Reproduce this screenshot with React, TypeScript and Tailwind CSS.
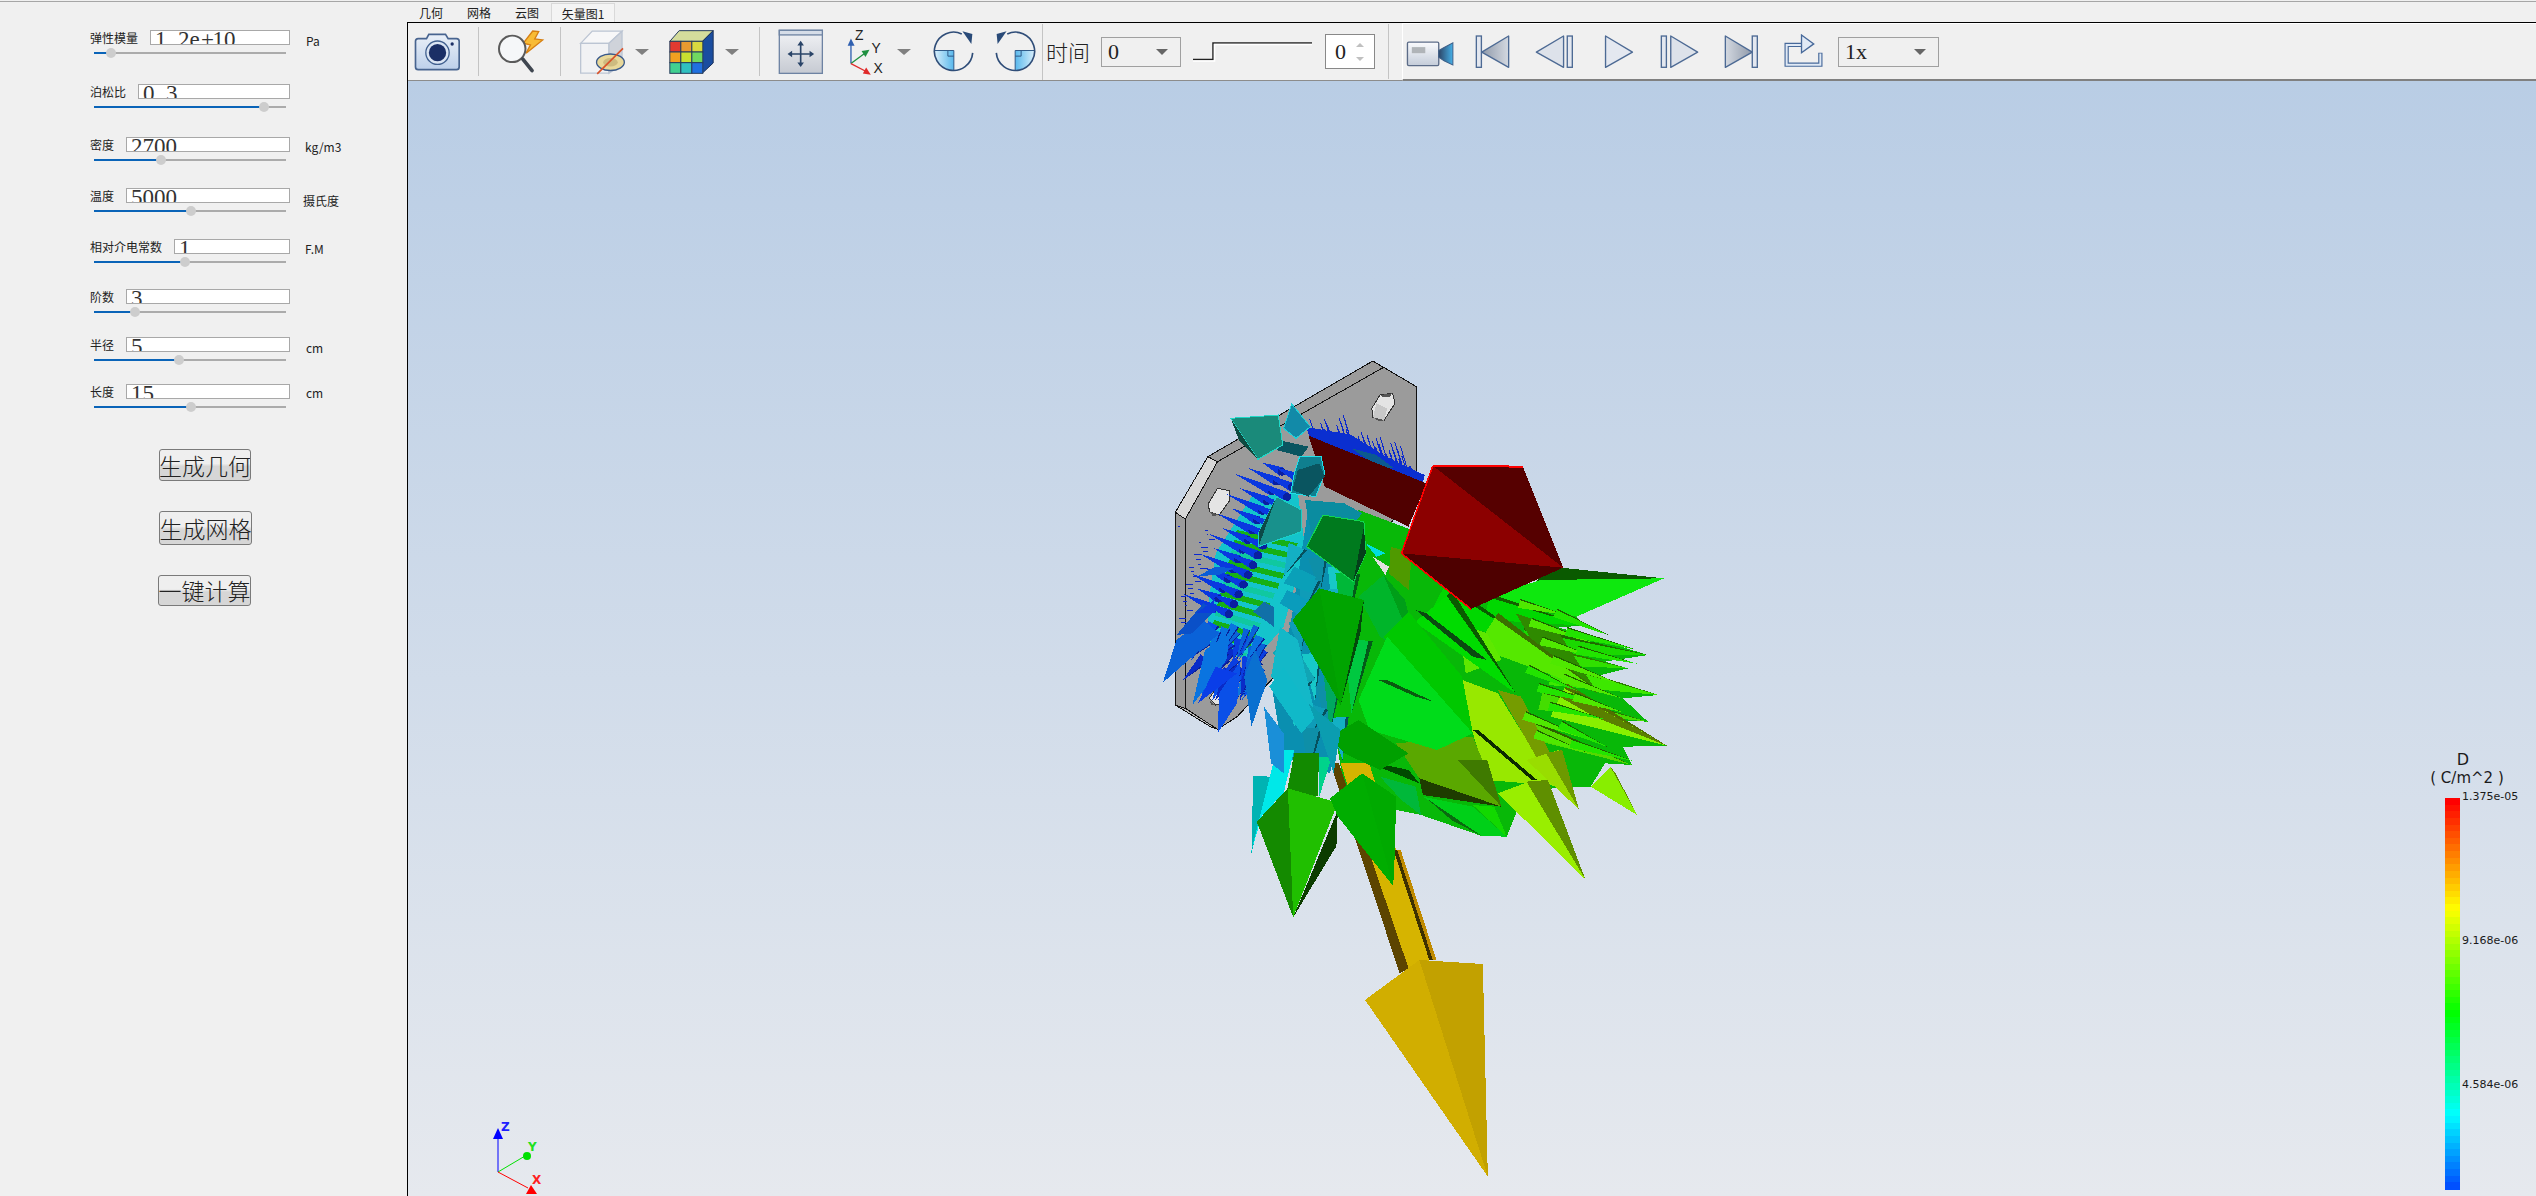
import type { ReactNode } from "react";

const cjk = "font-['Noto_Sans_CJK_SC',sans-serif]";
const serif = "font-['Liberation_Serif','Noto_Sans_CJK_SC',serif]";

interface Param {
  label: string;
  value: string;
  unit?: string;
  unitClass?: string;
  thumb: number;
  rowClass: string;
}

// thumb = distance of the handle from the start of the track
const params: Param[] = [
  { label: "弹性模量", value: "1.2e+10", unit: "Pa", unitClass: "ml-4 mt-[3px]", thumb: 17, rowClass: "mt-[28px]" },
  { label: "泊松比", value: "0.3", thumb: 170, rowClass: "mt-[26px]" },
  { label: "密度", value: "2700", unit: "kg/m3", unitClass: "ml-[15px] mt-[2px]", thumb: 67, rowClass: "mt-[25px]" },
  { label: "温度", value: "5000", unit: "摄氏度", unitClass: "ml-[13px] mt-[5px]", thumb: 97, rowClass: "mt-[23px]" },
  { label: "相对介电常数", value: "1", unit: "F.M", unitClass: "ml-[15px] mt-[2px]", thumb: 91, rowClass: "mt-[23px]" },
  { label: "阶数", value: "3", thumb: 41, rowClass: "mt-[22px]" },
  { label: "半径", value: "5", unit: "cm", unitClass: "ml-4 mt-[3px]", thumb: 85, rowClass: "mt-[20px]" },
  { label: "长度", value: "15", unit: "cm", unitClass: "ml-4 mt-[1px]", thumb: 97, rowClass: "mt-[19px]" },
];

function ParamRow({ p }: { p: Param }) {
  return (
    <div className={`flex items-start ${p.rowClass}`}>
      <div className="w-[200px]">
        <div className="flex items-center gap-3">
          <span className={`${cjk} whitespace-nowrap text-xs leading-[15px] text-[#222]`}>{p.label}</span>
          <div className={`${serif} h-[15px] flex-1 overflow-hidden border border-[#a8a8a8] bg-white pl-1 text-[23px] leading-[18px] text-[#333]`}>
            {p.value.split("").map((c, i) => (
              <span key={i} className="inline-block w-[11.5px]">{c}</span>
            ))}
          </div>
        </div>
        <div className="relative ml-1 mt-[3px] flex h-[10px] w-[192px] items-center">
          <div className="h-[2px] w-full bg-[#ababab]" />
          <div className="absolute left-0 h-[2px] bg-[#0a64b8]" style={{ width: p.thumb }} />
          <div className="absolute h-[10px] w-[10px] rounded-full bg-[#cdcdcd]" style={{ left: p.thumb - 5 }} />
        </div>
      </div>
      {p.unit && <span className={`${cjk} text-xs leading-4 text-[#222] ${p.unitClass}`}>{p.unit}</span>}
    </div>
  );
}

function ActionButton({ className, children }: { className: string; children: ReactNode }) {
  return (
    <div className={`${cjk} flex items-center justify-center overflow-hidden whitespace-nowrap rounded-[3px] border border-[#7a7a7a] bg-gradient-to-b from-[#efefef] from-45% to-[#d6d6d6] to-55% text-[23px] font-light text-[#222] ${className}`}>
      {children}
    </div>
  );
}

function Caret({ className }: { className: string }) {
  return (
    <svg viewBox="0 0 14 6" className={`h-[6px] w-[14px] shrink-0 ${className}`}>
      <polygon points="0,0 14,0 7,6" fill="#808080" />
    </svg>
  );
}

function Sep({ className }: { className: string }) {
  return <div className={`w-px shrink-0 bg-[#c4c4c4] ${className}`} />;
}

function CameraIcon() {
  return (
    <svg viewBox="18 30 140 120" className="ml-[6px] h-[40px] w-[47px] shrink-0">
      <defs>
        <linearGradient id="cam" x1="0" y1="0" x2="0" y2="1">
          <stop offset="0" stopColor="#eaf0f8" />
          <stop offset="1" stopColor="#bdd0ea" />
        </linearGradient>
      </defs>
      <path d="M30 50 H55 L62 37 H112 L120 50 H145 Q153 50 153 58 V135 Q153 143 145 143 H30 Q22 143 22 135 V58 Q22 50 30 50 Z" fill="url(#cam)" stroke="#48648f" strokeWidth="5" />
      <circle cx="88" cy="92" r="35" fill="#dbe5f3" stroke="#41608f" strokeWidth="4" />
      <circle cx="88" cy="92" r="26" fill="#1b2f66" />
      <circle cx="132" cy="66" r="5" fill="#1b2f66" />
    </svg>
  );
}

function SearchIcon() {
  return (
    <svg viewBox="262 22 146 136" className="ml-[17px] h-[45px] w-[49px] shrink-0">
      <polygon points="372,28 343,65 365,70 352,95 402,55 378,52 390,30" fill="#f8bb35" stroke="#d67f12" strokeWidth="4" />
      <circle cx="310" cy="82" r="40" fill="#f5f7f9" stroke="#5a5a5a" strokeWidth="6" />
      <line x1="342" y1="113" x2="370" y2="148" stroke="#3f4650" strokeWidth="11" strokeLinecap="round" />
    </svg>
  );
}

function ClipCubeIcon() {
  return (
    <svg viewBox="510 22 142 138" className="ml-[18px] h-[46px] w-[47px] shrink-0">
      <polygon points="515,65 550,28 640,28 600,65" fill="#f7f7f8" stroke="#bcc5d3" strokeWidth="4" />
      <polygon points="600,65 640,28 640,130 600,155" fill="#cfd3da" stroke="#bcc5d3" strokeWidth="4" />
      <polygon points="515,65 600,65 600,155 515,155" fill="#f1f2f4" stroke="#bcc5d3" strokeWidth="4" />
      <ellipse cx="605" cy="122" rx="42" ry="25" fill="#e8d89a" stroke="#3a5a8a" strokeWidth="4" />
      <ellipse cx="605" cy="122" rx="22" ry="13" fill="#cdbb80" />
      <line x1="565" y1="157" x2="643" y2="80" stroke="#d9532a" strokeWidth="5" />
    </svg>
  );
}

function ColorCubeIcon() {
  const cells = ["#e03a30", "#e89a30", "#d8d840", "#f0a020", "#c8e030", "#70d860", "#40d090", "#30c0c0", "#2070e0"];
  return (
    <svg viewBox="780 26 134 132" className="ml-[20px] h-[44px] w-[45px] shrink-0">
      <polygon points="782,60 810,28 912,28 880,60" fill="#d4dc9c" stroke="#273c5c" strokeWidth="3" />
      <polygon points="880,60 912,28 912,125 880,155" fill="#1a4da0" stroke="#1c3258" strokeWidth="3" />
      {cells.map((c, i) => (
        <rect key={c} x={782 + (i % 3) * 33} y={60 + Math.floor(i / 3) * 32} width="33" height="32" fill={c} stroke="#273c5c" strokeWidth="3" />
      ))}
    </svg>
  );
}

function FitIcon() {
  return (
    <svg viewBox="53 20 140 140" className="ml-[18px] h-[46px] w-[46px] shrink-0">
      <defs>
        <linearGradient id="fit" x1="0" y1="0" x2="0" y2="1">
          <stop offset="0" stopColor="#f2f3f6" />
          <stop offset="1" stopColor="#c6cad2" />
        </linearGradient>
      </defs>
      <rect x="57" y="24" width="131" height="131" fill="url(#fit)" stroke="#6e83a3" strokeWidth="4" />
      <rect x="57" y="24" width="131" height="14" fill="#d6dde8" stroke="#6e83a3" strokeWidth="4" />
      <path d="M122 68 V124 M94 96 H150" stroke="#2a4468" strokeWidth="5" />
      <path d="M122 56 L132 70 H112 Z M122 136 L132 122 H112 Z M82 96 L96 86 V106 Z M163 96 L149 86 V106 Z" fill="#2a4468" />
    </svg>
  );
}

function AxisIcon() {
  return (
    <svg viewBox="260 18 112 138" className="ml-[23px] h-[46px] w-[37px] shrink-0">
      <line x1="272" y1="122" x2="272" y2="60" stroke="#2f5fb0" strokeWidth="4" />
      <polygon points="272,46 262,68 283,68" fill="#2f5fb0" />
      <line x1="272" y1="122" x2="315" y2="90" stroke="#1f9040" strokeWidth="4" />
      <polygon points="328,80 304,84 316,102" fill="#1f9040" />
      <line x1="272" y1="122" x2="318" y2="146" stroke="#e02a2a" strokeWidth="4" />
      <polygon points="332,156 308,152 318,134" fill="#e02a2a" />
      <text x="284" y="52" fontSize="42" fill="#222" fontFamily="Liberation Sans">Z</text>
      <text x="334" y="90" fontSize="42" fill="#222" fontFamily="Liberation Sans">Y</text>
      <text x="340" y="152" fontSize="42" fill="#222" fontFamily="Liberation Sans">X</text>
    </svg>
  );
}

function RotateIcon({ className, id }: { className: string; id: string }) {
  return (
    <svg viewBox="515 26 128 130" className={`h-[43px] w-[43px] shrink-0 ${className}`}>
      <defs>
        <linearGradient id={id} x1="0" y1="0" x2="1" y2="0">
          <stop offset="0" stopColor="#d8eefb" />
          <stop offset="1" stopColor="#58b8ec" />
        </linearGradient>
      </defs>
      <path d="M522 88 H580 V148 A58 58 0 0 1 522 88 Z" fill={`url(#${id})`} />
      <path d="M522 88 H580 V148 M562 88 V105 H580" fill="none" stroke="#2f5a88" strokeWidth="3" />
      <path d="M637 95 A58 58 0 1 1 604 38" fill="none" stroke="#2f4d78" strokeWidth="5" />
      <polygon points="606,30 636,38 633,68" fill="#294a78" />
    </svg>
  );
}

function StepSlider() {
  return (
    <svg viewBox="0 0 120 20" className="ml-3 h-5 w-[120px] shrink-0">
      <path d="M0 17.5 H20 V1 H119" fill="none" stroke="#222" strokeWidth="1.5" />
      <path d="M0 19 H21.5 V2.5 H119" fill="none" stroke="#fff" strokeWidth="1.5" />
    </svg>
  );
}

function SpinBox() {
  return (
    <div className={`${serif} ml-3 flex h-[35px] w-[50px] shrink-0 items-center justify-between border border-[#888] bg-white pl-[9px] pr-[10px] text-[22px] text-[#222]`}>
      <span>0</span>
      <div className="flex flex-col gap-[10px]">
        <svg viewBox="0 0 8 4" className="h-1 w-2"><polygon points="4,0 8,4 0,4" fill="#c0c0c0" /></svg>
        <svg viewBox="0 0 8 4" className="h-1 w-2"><polygon points="0,0 8,0 4,4" fill="#c0c0c0" /></svg>
      </div>
    </div>
  );
}

function ComboBox({ value, className }: { value: string; className: string }) {
  return (
    <div className={`${serif} flex h-[30px] shrink-0 items-center justify-between border border-[#a0a0a0] pl-[6px] text-[22px] text-[#222] ${className}`}>
      <span>{value}</span>
      <svg viewBox="0 0 12 6" className="mr-3 h-[6px] w-3"><polygon points="0,0 12,0 6,6" fill="#666" /></svg>
    </div>
  );
}

function VideoIcon() {
  return (
    <svg viewBox="33 36 142 104" className="ml-[3px] h-[35px] w-[48px] shrink-0">
      <defs>
        <linearGradient id="vid" x1="0" y1="0" x2="0" y2="1">
          <stop offset="0" stopColor="#fafbfd" />
          <stop offset="1" stopColor="#c4ccd9" />
        </linearGradient>
        <linearGradient id="lens" x1="0" y1="0" x2="1" y2="0">
          <stop offset="0" stopColor="#2d4668" />
          <stop offset="1" stopColor="#45b0e8" />
        </linearGradient>
      </defs>
      <rect x="37" y="60" width="93" height="70" rx="4" fill="url(#vid)" stroke="#5c6c88" strokeWidth="4" />
      <rect x="50" y="75" width="40" height="18" fill="#b0b4b8" />
      <polygon points="130,85 146,76 172,62 172,128 146,116 130,105" fill="url(#lens)" stroke="#3e5f88" strokeWidth="3" />
    </svg>
  );
}

// media buttons: triangle and optional bar, coordinates as read from the 3x crop
function MediaIcon({ box, tri, bar, fill, className }: { box: string; tri: string; bar?: number; fill: string; className: string }) {
  return (
    <svg viewBox={box} className={`h-[35px] shrink-0 ${className}`}>
      <defs>
        <linearGradient id="mediaDark" x1="0" y1="0" x2="1" y2="0">
          <stop offset="0" stopColor="#8f99a9" />
          <stop offset="1" stopColor="#d4d9e1" />
        </linearGradient>
        <linearGradient id="mediaDarkR" x1="0" y1="0" x2="1" y2="0">
          <stop offset="0" stopColor="#d4d9e1" />
          <stop offset="1" stopColor="#8f99a9" />
        </linearGradient>
      </defs>
      <polygon points={tri} fill={fill} stroke="#4d6a94" strokeWidth="4" strokeLinejoin="round" />
      {bar !== undefined && <rect x={bar} y="42" width="15" height="93" fill="#e4e8f0" stroke="#4d6a94" strokeWidth="4" />}
    </svg>
  );
}

function ExportIcon() {
  return (
    <svg viewBox="1165 36 118 104" className="ml-[25px] h-[35px] w-[39px] shrink-0">
      <path d="M1275 92 V128 H1173 V68 H1222" fill="none" stroke="#47699a" strokeWidth="13" />
      <path d="M1275 94 V128 H1173 V68 H1222" fill="none" stroke="#e0e9f5" strokeWidth="6" />
      <polygon points="1218,38 1255,65 1218,92" fill="#e0e9f5" stroke="#47699a" strokeWidth="4" />
    </svg>
  );
}

type Poly = [string, string, string?];

const frac = (v: number) => v - Math.floor(v);

// a flat spike with a dark sliver along its upper side
function spike(bx: number, by: number, tx: number, ty: number, w: number, fill: string, dark: string): Poly[] {
  const len = Math.hypot(tx - bx, ty - by);
  const nx = -(ty - by) / len;
  const ny = (tx - bx) / len;
  return [
    [fill, `${bx + nx * w},${by + ny * w} ${tx},${ty} ${bx - nx * w},${by - ny * w}`],
    [dark, `${bx - nx * w},${by - ny * w} ${tx},${ty} ${bx - nx * w * 0.7},${by - ny * w * 0.7}`],
  ];
}

// scene polygons use the coordinates of the crop at (1130,340), 2.8x across and 3x down
const plate: Poly[] = [
  ["#9b9b9b", "127,517 155,537 155,1105 127,1095", "#111"],
  ["#d8d8d8", "127,517 218,350 245,365 155,537", "#111"],
  ["#9b9b9b", "218,350 680,63 710,82 245,365", "#111"],
  ["#9b9b9b", "155,537 245,365 710,82 802,140 802,440 500,900 300,1130 245,1168 155,1105", "#111"],
  ["#bdbdbd", "127,1095 155,1105 245,1168 225,1160", "#111"],
  ["#e4e4e4", "677,205 700,165 735,160 742,190 712,240 680,232", "#333"],
  ["#c8c8c8", "690,190 720,205 712,240 680,232"],
  ["#555555", "700,165 735,160 725,172 708,172"],
  ["#555555", "680,232 712,240 700,245"],
  ["#e4e4e4", "220,490 245,445 278,452 280,480 250,525 222,515", "#333"],
  ["#555555", "222,515 250,525 232,528"],
  ["#e4e4e4", "222,1075 250,1030 280,1050 270,1085 240,1095", "#333"],
  ["#555555", "222,1082 240,1095 228,1095"],
];

// diagonal stripes of the fringe between the plate and the large arrows
const strip: Poly[] = [
  ["#14c4cc", "340,470 470,460 490,620 430,860 350,960 230,930 215,820 240,640"],
  ...Array.from({ length: 12 }, (_, i): Poly => {
    const y = 570 + i * 30;
    const l = 300 - i * 7;
    return [i % 3 === 2 ? "#10c8a0" : "#16b016", `${l},${y} ${l + 170 - i * 6},${y + 40} ${l + 165 - i * 6},${y + 56} ${l - 8},${y + 16}`];
  }),
  ["#0a8fb0", "500,500 640,520 690,700 600,1100 560,1300 430,1250 400,1060 450,850"],
];

const tealColors = ["#13b0c4", "#0e8fa8", "#17c8c8", "#0f9cb8"];

// overlapping teal and green spikes in the middle, all falling down and to the left
const tealCloud: Poly[] = [
  ...Array.from({ length: 18 }, (_, i): Poly[] => {
    const bx = 470 + frac(i * 0.43) * 130;
    const by = 620 + i * 32;
    const tx = bx - 40 + frac(i * 0.67) * 70;
    const ty = by + 90 + frac(i * 0.29) * 60;
    return spike(bx, by, tx, ty, 28, tealColors[i % 4], "#06505e");
  }).flat(),
  ...spike(610, 700, 600, 900, 35, "#00b838", "#045a1a"),
  ...spike(640, 900, 620, 1120, 40, "#00c840", "#045a1a"),
  ...spike(570, 1000, 560, 1180, 28, "#00a860", "#045a3a"),
];

const needles = Array.from({ length: 120 }, (_, i) => {
  const t = frac(i * 0.381);
  const x = 505 + t * 300;
  const y = 285 + t * t * 125 + frac(i * 0.77) * 18;
  const len = 8 + 85 * frac(i * 0.53) * frac(i * 0.29 + 0.4);
  return { x1: x, y1: y, x2: x - len * 0.28, y2: y - len };
});

const needleBase: Poly[] = [
  ["#0a2fd0", "500,262 620,285 720,352 825,405 820,428 700,390 600,330 510,300"],
  ["#0b5a90", "620,325 690,345 740,385 700,385"],
];

const ticks = Array.from({ length: 30 }, (_, i) => ({
  x: 135 + frac(i * 0.618) * 100,
  y: 560 + frac(i * 0.37) * 340,
  len: 4 + frac(i * 0.91) * 18,
}));

// arrows standing along the left edge of the fringe
const smallArrows = Array.from({ length: 30 }, (_, i) => {
  const t = (i % 15) / 14;
  const off = i < 15 ? 0 : 42;
  const x = 425 - 190 * t + off;
  const y = 395 + 410 * t + off * 0.4;
  const l = 55 + 55 * frac(i * 0.47);
  return { x, y, tip: `${x - l},${y - l * 0.5} ${x + 6},${y - 12} ${x - 6},${y + 12}` };
});

const blues = ["#0a62d8", "#0a50e8", "#0a3ee0", "#0a74e0", "#0a2cc8"];

const blueCloud: Poly[] = Array.from({ length: 44 }, (_, i): Poly[] => {
  const bx = 205 + frac(i * 0.37) * 175;
  const by = 850 + frac(i * 0.61) * 175;
  const tx = bx - 15 - frac(i * 0.73) * 55;
  const ty = by + 55 + frac(i * 0.17) * 60;
  return spike(bx, by, tx, ty, 9 + frac(i * 0.41) * 10, blues[i % 5], "#0a2098");
}).flat();

const blueSpikes: Poly[] = [
  ["#0a62d8", "92,1028 130,900 205,840 250,880"],
  ["#0a50c8", "130,885 205,790 240,810 175,880"],
  ["#0a74e0", "175,1095 210,930 280,880 270,960"],
  ["#0a50e8", "245,1180 250,1060 310,960 300,1090"],
  ["#0a3ee8", "190,1090 240,980 300,1000"],
  ["#0a70d0", "340,1160 320,1010 350,930 385,1020"],
  ["#0a5cd8", "190,708 240,680 290,685 250,705"],
  ["#0a3cdc", "185,820 235,780 240,820"],
  ["#1070a8", "345,815 375,785 402,800 402,860"],
];

const greens: Poly[] = [
  ["#08b808", "640,510 790,570 1000,770 1250,830 1270,857 1200,862 1450,945 1330,965 1395,985 1300,1010 1480,1065 1380,1075 1450,1145 1340,1140 1505,1218 1380,1220 1405,1275 1330,1270 1290,1340 1200,1340 1100,1370 1055,1490 985,1488 815,1425 700,1400 600,1340 560,1100 610,700"],
  ["#0a5a00", "1180,680 1495,715 1140,722"],
  ["#0ee80e", "1150,720 1495,715 1250,830 1000,770"],
  ...spike(1000, 800, 1270, 857, 40, "#00d800", "#145f00"),
  ...spike(1100, 900, 1450, 945, 42, "#1ad800", "#1f6b00"),
  ...spike(1180, 950, 1395, 985, 26, "#30e000", "#2c7d00"),
  ...spike(1180, 1000, 1480, 1065, 36, "#3de800", "#2c7d00"),
  ...spike(1150, 1080, 1450, 1145, 30, "#44dd00", "#2c7000"),
  ...spike(1100, 1160, 1405, 1275, 30, "#55d800", "#2c6000"),
  ["#2f8a00", "1080,820 1190,860 1310,1060 1180,1000"],
  ...spike(860, 780, 1130, 910, 60, "#00d800", "#0a5a00"),
  ...spike(1000, 870, 1320, 1060, 60, "#55e800", "#3a7000"),
  ["#5ee800", "920,850 1000,880 1040,960 940,1000"],
  ...spike(850, 800, 1080, 1060, 70, "#00dc00", "#0a5a00"),
  ...spike(1200, 1080, 1505, 1218, 55, "#88f000", "#4f7000"),
  ["#5a7f00", "1170,1050 1240,1060 1505,1218 1300,1130"],
  ...spike(700, 1020, 1020, 1130, 40, "#00e020", "#0a5a00"),
  ["#98e800", "930,1020 1030,1060 1180,1320 1220,1340 1000,1320 960,1180"],
  ["#759c00", "1030,1050 1095,1070 1225,1340 1180,1330"],
  ["#0b2a00", "960,1170 975,1170 1140,1320 1125,1320"],
  // smaller spikes that break up the right side
  ...Array.from({ length: 16 }, (_, i): Poly[] => {
    const bx = 1090 + frac(i * 0.59) * 170;
    const by = 790 + i * 28;
    return spike(bx, by, bx + 130 + frac(i * 0.31) * 70, by + 35 + frac(i * 0.83) * 40, 14, i % 2 ? "#22e400" : "#4fe800", "#1f6000");
  }).flat(),
];

const yellowArrow: Poly[] = [
  ["#c08a00", "748,1530 758,1530 858,1860 848,1860"],
  ["#d6b400", "590,1270 670,1270 840,1860 770,1890"],
  ["#5c4400", "561,1270 585,1270 780,1885 755,1900"],
  ["#3d3000", "738,1530 748,1530 848,1860 838,1860"],
  ["#d1ae00", "810,1860 658,1980 1002,2510"],
  ["#c2a100", "810,1860 988,1872 1002,2510"],
];

const lowerSpikes: Poly[] = [
  ["#00b3b3", "345,1308 395,1310 340,1540"],
  ["#00e8e8", "410,1230 460,1230 430,1360 370,1425 338,1540"],
  ["#128a00", "460,1240 530,1240 525,1370 440,1350"],
  ["#00d38b", "530,1250 565,1250 530,1370"],
  ["#148a00", "442,1345 355,1445 457,1732"],
  ["#20bf00", "442,1345 582,1388 457,1732"],
  ["#0c3c00", "582,1410 578,1518 457,1732"],
  ["#00ad00", "650,1300 560,1375 582,1430 737,1638"],
  ["#00aa00", "650,1300 745,1370 742,1530 737,1638"],
  ["#00b83a", "700,1310 800,1340 815,1425 760,1380"],
  ["#00d018", "820,1370 960,1400 1055,1490 985,1488"],
  ["#0a6a10", "830,1375 985,1488 900,1440"],
  ["#12d800", "960,1395 1020,1400 1055,1490"],
  ["#004a00", "650,1260 780,1290 810,1330"],
  ["#5aa800", "745,1210 960,1190 1040,1400 810,1315"],
  ["#3f7a00", "918,1260 1000,1260 1040,1400"],
  ["#1e3c00", "810,1315 1040,1400 820,1365"],
  ["#99ee00", "1030,1360 1130,1320 1275,1618"],
  ["#5f8f00", "1110,1325 1170,1320 1275,1618"],
  ["#99dd00", "1110,1260 1200,1230 1257,1408"],
  ["#6c9a00", "1165,1240 1210,1230 1257,1408"],
  ["#88ee00", "1290,1340 1345,1280 1420,1425"],
  ["#5e8f00", "1345,1280 1360,1300 1420,1425"],
];

const midSpikes: Poly[] = [
  ["#00dede", "660,610 715,640 690,650"],
  ["#e0e0e0", "680,650 725,680 715,705"],
  ["#4f9a00", "730,620 790,640 780,750 725,700"],
  ["#00b52a", "710,705 640,770 700,890 815,970"],
  ["#009e18", "710,705 770,780 815,970"],
  ["#0a4a10", "800,810 830,820 1000,960 960,950"],
  ["#00c800", "780,815 710,890 850,1060 960,1180 930,1010"],
  ["#00dc1a", "720,890 640,1080 670,1170 860,1230 960,1180"],
  ["#0a5a10", "695,1020 720,1020 850,1085 800,1070"],
  ["#00a000", "560,1190 640,1140 780,1240 700,1290 600,1240"],
  ["#0aa0b8", "460,680 520,710 510,760 430,730"],
  ["#0a9cbc", "440,750 500,780 480,830 420,790"],
  ["#11a5b5", "400,940 440,880 520,1020 490,1030"],
  ["#13b8c8", "420,860 470,900 520,1130 395,1010"],
  ["#10b9c9", "390,1040 430,980 520,1130 480,1180"],
  ["#1a8fd8", "375,1100 430,1180 430,1300 395,1270"],
  ["#0b9db0", "500,1090 590,1170 570,1300 530,1170"],
  ["#009f00", "530,745 455,840 590,1095"],
  ["#00a400", "530,745 655,780 590,1095"],
  ["#04480b", "655,780 645,880 590,1095"],
];

const redArrow: Poly[] = [
  ["#500000", "500,287 830,430 780,560 545,440"],
  ["#560000", "848,377 1100,380 1213,683"],
  ["#8c0000", "848,377 760,640 1213,683"],
  ["#4e0000", "760,640 955,807 1213,683"],
];

const tealHeads: Poly[] = [
  ["#0a5560", "415,300 500,320 480,350 410,330"],
  ["#128aa8", "453,192 505,260 465,295 430,265", "#20d0d8"],
  ["#1a8a7a", "282,235 415,225 428,315 358,358", "#20d8c8"],
  ["#0d4a40", "282,235 358,358 305,300"],
  ["#0f7f8f", "475,350 535,350 545,400 520,470 450,460 460,400", "#20e0e8"],
  ["#0a5560", "470,390 530,370 545,410 500,470 455,450"],
  ["#0b8ca0", "490,480 600,490 650,520 620,560 510,600"],
  ["#18918c", "410,470 480,510 480,575 360,620 360,580", "#18d0c8"],
  ["#0c4a48", "410,470 360,580 360,620"],
  ["#007a1e", "540,525 655,545 660,640 625,725 495,620", "#10d850"],
  ["#04401a", "655,560 660,640 625,725"],
];

function polys(list: Poly[]) {
  return list.map(([fill, points, stroke], i) => (
    <polygon key={i} points={points} fill={fill} stroke={stroke} strokeWidth={stroke ? 1 : undefined} vectorEffect="non-scaling-stroke" />
  ));
}

function Scene() {
  return (
    <g transform="translate(1130 340) scale(0.35714 0.33333)" shapeRendering="crispEdges">
      {polys(plate)}
      {ticks.map((t, i) => (
        <line key={i} x1={t.x} y1={t.y} x2={t.x + t.len} y2={t.y} stroke="#0a28d0" strokeWidth="1" vectorEffect="non-scaling-stroke" />
      ))}
      {needles.map((n, i) => (
        <line key={i} {...n} stroke="#0a28d0" strokeWidth="1" vectorEffect="non-scaling-stroke" />
      ))}
      {polys(needleBase)}
      {polys(strip)}
      {smallArrows.map((a, i) => (
        <g key={i}>
          <polygon points={a.tip} fill="#0a38e0" />
          <circle cx={a.x} cy={a.y} r="12" fill="#0a1fa0" />
        </g>
      ))}
      {polys(blueCloud)}
      {polys(blueSpikes)}
      {polys(greens)}
      {polys(tealCloud)}
      {polys(yellowArrow)}
      {polys(lowerSpikes)}
      {polys(midSpikes)}
      {polys(redArrow)}
      <polyline points="848,377 1100,380" fill="none" stroke="#ff0000" strokeWidth="2" vectorEffect="non-scaling-stroke" />
      <polyline points="848,377 760,640 955,807" fill="none" stroke="#ff0000" strokeWidth="1.5" vectorEffect="non-scaling-stroke" />
      {polys(tealHeads)}
    </g>
  );
}

// colour of the legend band at height t (0 top, 1 bottom)
function bandColor(t: number) {
  const stops: [number, number[]][] = [
    [0, [255, 0, 0]],
    [0.28, [255, 255, 0]],
    [0.55, [0, 255, 0]],
    [0.815, [0, 255, 255]],
    [1, [0, 80, 255]],
  ];
  for (let i = 1; i < stops.length; i++) {
    if (t <= stops[i][0]) {
      const f = (t - stops[i - 1][0]) / (stops[i][0] - stops[i - 1][0]);
      const c = stops[i - 1][1].map((v, k) => Math.round(v + (stops[i][1][k] - v) * f));
      return `rgb(${c[0]},${c[1]},${c[2]})`;
    }
  }
  return "rgb(0,80,255)";
}

function Legend() {
  const bands = 59;
  const h = 391 / bands;
  return (
    <g fontFamily="DejaVu Sans" fill="#1a1a1a">
      <text x="2463" y="765" fontSize="16" textAnchor="middle">D</text>
      <text x="2467" y="783" fontSize="15" textAnchor="middle">( C/m^2 )</text>
      {Array.from({ length: bands }, (_, i) => (
        <rect key={i} x="2445" y={798 + i * h} width="15" height={h + 0.5} fill={bandColor(i / (bands - 1))} shapeRendering="crispEdges" />
      ))}
      <text x="2462" y="800" fontSize="11">1.375e-05</text>
      <text x="2462" y="944" fontSize="11">9.168e-06</text>
      <text x="2462" y="1088" fontSize="11">4.584e-06</text>
    </g>
  );
}

function AxisGizmo() {
  return (
    <g fontFamily="DejaVu Sans" fontWeight="bold" fontSize="12">
      <line x1="498" y1="1172" x2="498" y2="1136" stroke="#0000ff" strokeWidth="1" />
      <polygon points="498,1128 493,1139 503,1139" fill="#0000ff" />
      <text x="501" y="1131" fill="#2020ff">Z</text>
      <line x1="498" y1="1172" x2="525" y2="1156" stroke="#00e000" strokeWidth="1" />
      <circle cx="527" cy="1156" r="4" fill="#00e000" />
      <text x="528" y="1151" fill="#20e020">Y</text>
      <line x1="498" y1="1172" x2="528" y2="1188" stroke="#ff0000" strokeWidth="1" />
      <polygon points="537,1194 526,1194 531,1185" fill="#ff0000" />
      <text x="532" y="1184" fill="#ff2020">X</text>
    </g>
  );
}

export default function App() {
  return (
    <div className="flex h-screen w-screen flex-col overflow-hidden bg-[#f0f0f0]">
      <div className="mt-px h-px shrink-0 bg-[#a6a6a6]" />
      <div className="flex min-h-0 flex-1">
        <div className="w-[407px] shrink-0 pl-[90px] pr-[60px]">
          {params.map((p) => (
            <ParamRow key={p.label} p={p} />
          ))}
          <ActionButton className="ml-[69px] mt-[37px] h-8 w-[92px]">生成几何</ActionButton>
          <ActionButton className="ml-[69px] mt-[30px] h-[34px] w-[93px]">生成网格</ActionButton>
          <ActionButton className="ml-[68px] mt-[30px] h-[31px] w-[93px]">一键计算</ActionButton>
        </div>

        <div className="flex min-w-0 flex-1 flex-col">
          <div className={`${cjk} flex h-5 shrink-0 text-xs text-[#222]`}>
            <div className="flex w-12 items-center justify-center pt-[2px]">几何</div>
            <div className="flex w-12 items-center justify-center pt-[2px]">网格</div>
            <div className="flex w-12 items-center justify-center pt-[2px]">云图</div>
            <div className="mt-px flex w-16 items-center justify-center border-x border-t border-[#d9d9d9] bg-[#f4f4f4] pt-px">矢量图1</div>
          </div>

          <div className="flex min-h-0 flex-1 flex-col border-l border-t border-black">
            <div className="flex h-[58px] shrink-0">
              <div className="flex w-[994px] shrink-0 items-center border-b border-[#8c8c8c]">
                <CameraIcon />
                <Sep className="ml-[17px] h-[49px]" />
                <SearchIcon />
                <Sep className="ml-[15px] h-[49px]" />
                <ClipCubeIcon />
                <Caret className="ml-[9px]" />
                <ColorCubeIcon />
                <Caret className="ml-[11px]" />
                <Sep className="ml-5 h-[49px]" />
                <FitIcon />
                <AxisIcon />
                <Caret className="ml-[13px]" />
                <RotateIcon id="rotA" className="ml-[21px]" />
                <RotateIcon id="rotB" className="ml-[19px] -scale-x-100" />
                <Sep className="ml-[5px] h-[56px] bg-[#8c8c8c]" />
                <span className={`${cjk} ml-[3px] w-[44px] shrink-0 text-[22px] font-light text-[#222]`}>时间</span>
                <ComboBox value="0" className="ml-[11px] w-[80px]" />
                <StepSlider />
                <SpinBox />
                <Sep className="ml-[13px] h-[55px] bg-[#a8a8a8]" />
              </div>
              <div className="flex flex-1 items-center border-b-2 border-l border-t border-b-[#808080] border-l-white border-t-white">
                <VideoIcon />
                <MediaIcon box="238 36 104 104" tri="258,90 338,42 338,135" bar={242} fill="url(#mediaDark)" className="ml-[21px] w-[35px]" />
                <MediaIcon box="418 36 116 104" tri="422,90 503,42 503,135" bar={514} fill="#dde2ea" className="ml-[25px] w-[39px]" />
                <MediaIcon box="626 36 88 104" tri="630,42 710,90 630,135" fill="#e4e8f0" className="ml-[30px] w-[30px]" />
                <MediaIcon box="793 36 116 104" tri="825,42 905,90 825,135" bar={797} fill="#dde2ea" className="ml-[26px] w-[39px]" />
                <MediaIcon box="983 36 104 104" tri="987,42 1067,90 987,135" bar={1067} fill="url(#mediaDarkR)" className="ml-[25px] w-[35px]" />
                <ExportIcon />
                <ComboBox value="1x" className="ml-[15px] w-[101px]" />
              </div>
            </div>

            <div className="relative min-h-0 flex-1 bg-gradient-to-b from-[#b9cde5] to-[#e6e9ee]">
              <svg viewBox="408 81 2128 1115" className="absolute inset-0 h-full w-full">
                <Scene />
                <AxisGizmo />
                <Legend />
              </svg>
            </div>
          </div>
        </div>
      </div>
    </div>
  );
}
